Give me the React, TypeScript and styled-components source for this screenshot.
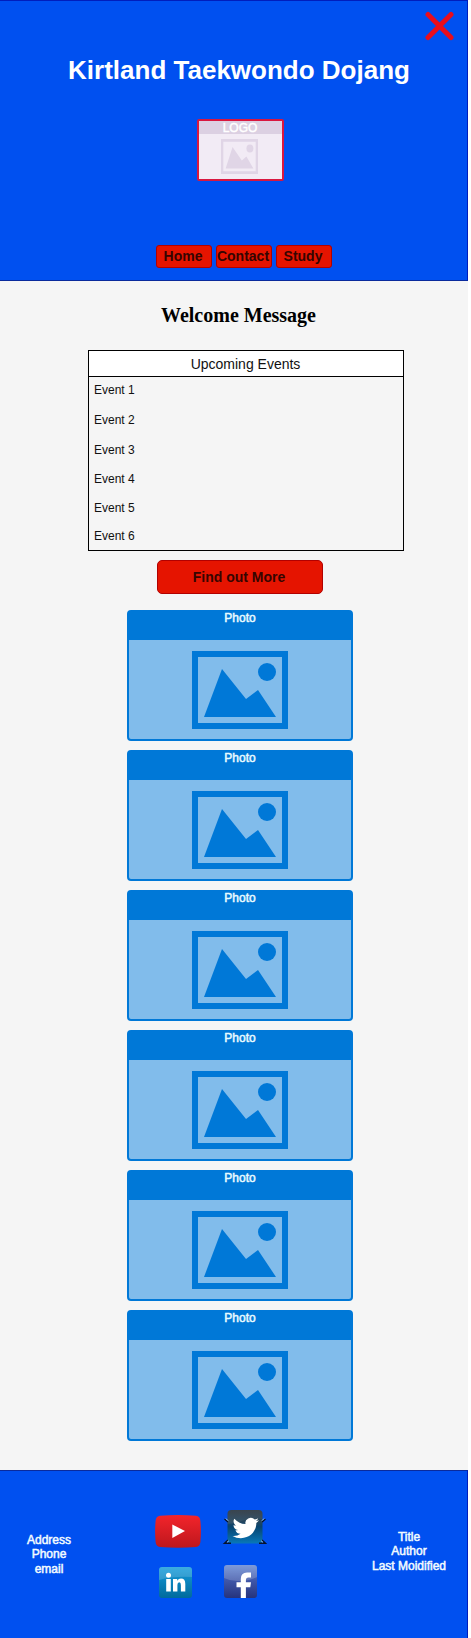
import React from "react";
import styled, { createGlobalStyle } from "styled-components";

const GlobalStyle = createGlobalStyle`
  * { box-sizing: border-box; }
  html, body { margin: 0; padding: 0; background: #fff; }
  body { font-family: "Liberation Sans", Arial, sans-serif; }
`;

const Page = styled.div`
  width: 468px;
  height: 1638px;
  display: flex;
  flex-direction: column;
  background: #f5f5f5;
`;

const Header = styled.header`
  position: relative;
  height: 281px;
  background: #0050f0;
  border: 1px solid #001dbc;
  border-left: 0;
  border-bottom-color: #0a2a9c;
  display: flex;
  flex-direction: column;
  align-items: center;
`;

const CloseButton = styled.button`
  position: absolute;
  top: 9px;
  right: 12px;
  width: 31px;
  height: 31px;
  padding: 0;
  border: 0;
  background: none;
  svg { display: block; }
`;

const Title = styled.h1`
  margin: 54px 0 0 11px;
  font-size: 26px;
  line-height: 30px;
  color: #fff;
  white-space: nowrap;
`;

const Logo = styled.div`
  width: 87px;
  height: 62px;
  margin: 34px 0 0 14px;
  border: 2px solid #d9173f;
  border-radius: 2px;
  background: #f2ebf5;
  display: flex;
  flex-direction: column;
  align-items: center;
  gap: 5px;
  svg { margin-right: 2px; }
`;

const LogoCaption = styled.div`
  width: 100%;
  height: 13px;
  padding-right: 1px;
  background: #dcd0e2;
  color: #fff;
  font-size: 12px;
  line-height: 14px;
  text-align: center;
  -webkit-text-stroke: 0.45px #fff;
`;

const Nav = styled.nav`
  display: flex;
  gap: 4px;
  margin: 64px 0 0 21px;
`;

const RedButton = styled.button<{ $w: number; $h: number; $r: number; $lift?: number }>`
  width: ${(p) => p.$w}px;
  height: ${(p) => p.$h}px;
  padding: 0 2px ${(p) => p.$lift ?? 0}px 0;
  display: flex;
  align-items: center;
  justify-content: center;
  background: #e51400;
  border: 1px solid #b20000;
  border-radius: ${(p) => p.$r}px;
  color: #350500;
  font: bold 14px/16px "Liberation Sans", Arial, sans-serif;
  white-space: nowrap;
`;

const Main = styled.main`
  flex: 1;
  display: flex;
  flex-direction: column;
  align-items: center;
`;

const Welcome = styled.h2`
  margin: 22px 0 0 9px;
  font-family: "Liberation Serif", "Times New Roman", serif;
  font-size: 20px;
  line-height: 24px;
  color: #000;
`;

const Events = styled.section`
  width: 316px;
  height: 201px;
  margin: 23px 0 9px 24px;
  border: 1px solid #000;
  color: #111;
`;

const EventsTitle = styled.h3`
  margin: 0;
  height: 26px;
  padding-right: 1px;
  background: #fff;
  border-bottom: 1px solid #000;
  font-size: 14px;
  font-weight: normal;
  line-height: 27px;
  text-align: center;
`;

const EventList = styled.ul`
  list-style: none;
  margin: 0;
  padding: 0 5px;
  font-size: 12px;
`;

const EventRow = styled.li<{ $h: number }>`
  height: ${(p) => p.$h}px;
  line-height: 26px;
`;

const More = styled.div`
  padding-left: 12px;
`;

const Gallery = styled.div`
  display: flex;
  flex-direction: column;
  gap: 9px;
  margin: 16px 0 0 12px;
`;

const Card = styled.figure`
  width: 226px;
  height: 131px;
  margin: 0;
  border: 2px solid #0078d7;
  border-radius: 4px;
  background: #81bceb;
  display: flex;
  flex-direction: column;
  align-items: center;
  gap: 11px;
`;

const CardCaption = styled.figcaption`
  width: 100%;
  height: 28px;
  background: #0078d7;
  color: #e8fbff;
  font-size: 12px;
  line-height: 12px;
  text-align: center;
  -webkit-text-stroke: 0.5px #e8fbff;
`;

const Footer = styled.footer`
  height: 168px;
  background: #0050f0;
  border-top: 1px solid #0a2a9c;
  border-right: 1px solid #001dbc;
  display: flex;
  align-items: flex-start;
`;

const FooterText = styled.div<{ $w: number; $top: number }>`
  flex: none;
  width: ${(p) => p.$w}px;
  padding-top: ${(p) => p.$top}px;
  font-size: 12px;
  line-height: 14.4px;
  text-align: center;
  color: #f2fbff;
  -webkit-text-stroke: 0.5px #f2fbff;
`;

const Socials = styled.div`
  flex: none;
  width: 252px;
  padding: 39px 0 0 57px;
  display: grid;
  grid-template-columns: 46px 42px;
  grid-template-rows: 34px 33px;
  column-gap: 23px;
  row-gap: 21px;
  svg { display: block; overflow: visible; }
`;

const Slot = styled.a<{ $x?: number; $y?: number }>`
  padding: ${(p) => p.$y ?? 0}px 0 0 ${(p) => p.$x ?? 0}px;
`;

function PictureIcon({ width, height, color }: { width: number; height: number; color: string }) {
  return (
    <svg width={width} height={height} viewBox="0 0 96 78" preserveAspectRatio="none" fill={color}>
      <path fillRule="evenodd" d="M0 0H96V78H0ZM6 6V72H90V6Z" />
      <circle cx="75" cy="21" r="9" />
      <path d="M12 66 30 18 54 48 66 39 84 66Z" />
    </svg>
  );
}

function YouTube() {
  return (
    <svg width="46" height="33" viewBox="0 0 46 33">
      <defs>
        <linearGradient id="yt" x2="0" y2="1">
          <stop offset="0" stopColor="#f3242b" />
          <stop offset="1" stopColor="#bd171d" />
        </linearGradient>
      </defs>
      <path d="M5 .8Q23-.8 41 .8Q45 1.2 45.4 6Q46.4 16 45.4 27Q45 31.500 41 32Q23 33.600 5 32Q1 31.500.6 27Q-.4 16 .6 6Q1 1.200 5 .8Z" fill="url(#yt)" />
      <path d="M17.300 9.500V23L30 16Z" fill="#fff" />
    </svg>
  );
}

function Twitter() {
  return (
    <svg width="42" height="34" viewBox="0 0 42 34">
      <defs>
        <linearGradient id="tw" x2="0" y2="1">
          <stop offset="0" stopColor="#2b3640" />
          <stop offset=".35" stopColor="#24465f" />
          <stop offset=".5" stopColor="#07446f" />
          <stop offset="1" stopColor="#0878b9" />
        </linearGradient>
      </defs>
      <rect x="3.500" width="35" height="33.500" rx="4" fill="url(#tw)" />
      <path d="M3.500 14V4Q3.500 0 7.500 0H34.500Q38.500 0 38.500 4V9Q24 8 15 12Q8 14 3.500 14Z" fill="#fff" opacity=".07" />
      <g fill="none" stroke="#06142e" strokeWidth="1.400">
        <path d="M.5 9 4 12M41.500 9 38 12M4 30 .5 33.300H7M38 30 41.500 33.300H35" />
      </g>
      <path d="M1.700 8.600 4.500 10.800M40.300 8.600 37.500 10.800M3 32.300 5 30.700M39 32.300 37 30.700" stroke="#b9d4e8" strokeWidth=".8" />
      <svg x="8.500" y="7" width="26.500" height="22" viewBox="0 1.500 24 21" preserveAspectRatio="none">
        <path fill="#fff" d="M23.953 4.570a10 10 0 0 1-2.825.775 4.958 4.958 0 0 0 2.163-2.723c-.951.555-2.005.959-3.127 1.184a4.920 4.920 0 0 0-8.384 4.482C7.690 8.095 4.067 6.130 1.640 3.162a4.822 4.822 0 0 0-.666 2.475c0 1.710.870 3.213 2.188 4.096a4.904 4.904 0 0 1-2.228-.616v.060a4.923 4.923 0 0 0 3.946 4.827 4.996 4.996 0 0 1-2.212.085 4.936 4.936 0 0 0 4.604 3.417 9.867 9.867 0 0 1-6.102 2.105c-.390 0-.779-.023-1.170-.067a13.995 13.995 0 0 0 7.557 2.209c9.053 0 13.998-7.496 13.998-13.985 0-.210 0-.420-.015-.630A9.935 9.935 0 0 0 24 4.590z" />
      </svg>
    </svg>
  );
}

function LinkedIn() {
  return (
    <svg width="33" height="31" viewBox="0 0 33 31">
      <defs>
        <linearGradient id="li" x2="0" y2="1">
          <stop offset="0" stopColor="#169cdc" />
          <stop offset="1" stopColor="#006a9c" />
        </linearGradient>
      </defs>
      <rect width="33" height="31" rx="3" fill="url(#li)" />
      <path d="M0 13V3Q0 0 3 0H30Q33 0 33 3V10Q14 9 0 13Z" fill="#fff" opacity=".16" />
      <g fill="#fff">
        <circle cx="9.500" cy="8.300" r="2.500" />
        <path d="M7.200 12H11.800V24.500H7.200ZM14 12H18.200V13.700Q19.500 11.600 22 11.600Q26.300 11.600 26.300 17V24.500H21.900V18Q21.900 15.300 20.300 15.300Q18.400 15.300 18.400 18V24.500H14Z" />
      </g>
    </svg>
  );
}

function Facebook() {
  return (
    <svg width="33" height="33" viewBox="0 0 33 33">
      <defs>
        <linearGradient id="fb" x2="0" y2="1">
          <stop offset="0" stopColor="#6387d2" />
          <stop offset=".45" stopColor="#4058aa" />
          <stop offset="1" stopColor="#26337d" />
        </linearGradient>
      </defs>
      <rect width="33" height="33" rx="3" fill="url(#fb)" />
      <path d="M0 15V3Q0 0 3 0H30Q33 0 33 3V12Q25 16 15 16Q7 16.500 0 13Z" fill="#fff" opacity=".17" />
      <path d="M16.800 33V22.300H12.500V17.300H16.800V14Q16.800 7.500 23 7.500H27V12.500H24.400Q21.900 12.500 21.900 15V17.300H27L26.300 22.300H21.900V33Z" fill="#fff" />
    </svg>
  );
}

const navItems = ["Home", "Contact", "Study"];
const events = [
  { name: "Event 1", height: 30 },
  { name: "Event 2", height: 30 },
  { name: "Event 3", height: 29 },
  { name: "Event 4", height: 29 },
  { name: "Event 5", height: 28 },
  { name: "Event 6", height: 26 },
];
const photos = [1, 2, 3, 4, 5, 6];

export default function App() {
  return (
    <>
      <GlobalStyle />
      <Page>
        <Header>
          <CloseButton aria-label="Close">
            <svg width="31" height="31" viewBox="0 0 31 31">
              <path d="M4 4.500 27 27.500M27 4.500 4 27.500" stroke="#e90d1c" strokeWidth="5" strokeLinecap="round" />
            </svg>
          </CloseButton>
          <Title>Kirtland Taekwondo Dojang</Title>
          <Logo>
            <LogoCaption>LOGO</LogoCaption>
            <PictureIcon width={37} height={35} color="#e0d5e6" />
          </Logo>
          <Nav>
            {navItems.map((n) => (
              <RedButton key={n} $w={56} $h={23} $r={3} $lift={2}>{n}</RedButton>
            ))}
          </Nav>
        </Header>
        <Main>
          <Welcome>Welcome Message</Welcome>
          <Events>
            <EventsTitle>Upcoming Events</EventsTitle>
            <EventList>
              {events.map((e) => (
                <EventRow key={e.name} $h={e.height}>{e.name}</EventRow>
              ))}
            </EventList>
          </Events>
          <More>
            <RedButton $w={166} $h={34} $r={5}>Find out More</RedButton>
          </More>
          <Gallery>
            {photos.map((p) => (
              <Card key={p}>
                <CardCaption>Photo</CardCaption>
                <PictureIcon width={96} height={78} color="#0078d7" />
              </Card>
            ))}
          </Gallery>
        </Main>
        <Footer>
          <FooterText $w={98} $top={62}>
            Address<br />Phone<br />email
          </FooterText>
          <Socials>
            <Slot $y={5}><YouTube /></Slot>
            <Slot><Twitter /></Slot>
            <Slot $x={4} $y={2}><LinkedIn /></Slot>
            <Slot><Facebook /></Slot>
          </Socials>
          <FooterText $w={118} $top={59}>
            Title<br />Author<br />Last Moidified
          </FooterText>
        </Footer>
      </Page>
    </>
  );
}
